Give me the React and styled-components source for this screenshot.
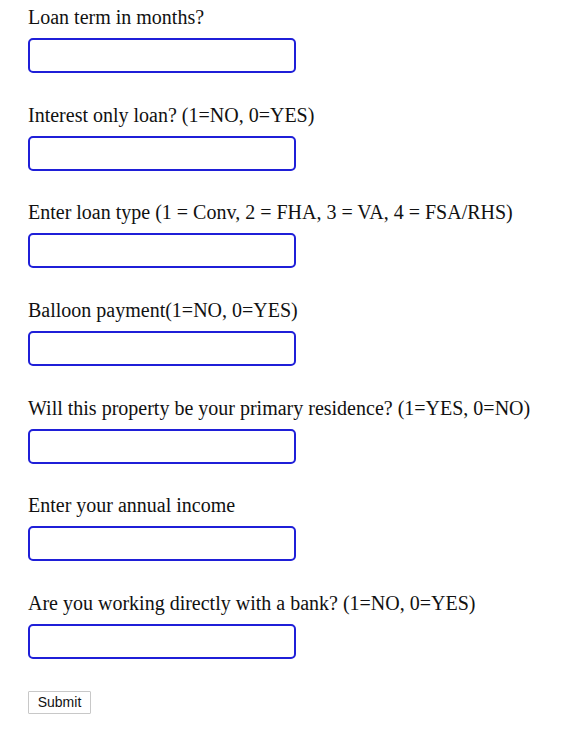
import React from 'react';
import styled, { createGlobalStyle } from 'styled-components';

const GlobalStyle = createGlobalStyle`
    body {
        margin: 0;
        background: #ffffff;
    }
`;

const Form = styled.form`
    display: flex;
    flex-direction: column;
    padding: 6px 0 0 28px;
`;

const Field = styled.div`
    display: flex;
    flex-direction: column;
    align-items: flex-start;
    height: 97.7px;
`;

const Label = styled.label`
    font-family: "Liberation Serif", "Times New Roman", serif;
    font-size: 20px;
    line-height: 22px;
    color: #111;
    margin-bottom: 10px;
    white-space: nowrap;
`;

const Input = styled.input`
    box-sizing: border-box;
    width: 268px;
    height: 35px;
    border: 2px solid #1f1fd8;
    border-radius: 5px;
    background: #fff;
    outline: none;
    padding: 0 6px;
    font-size: 16px;
`;

const SubmitButton = styled.button`
    box-sizing: border-box;
    margin-top: 1px;
    width: 63px;
    height: 23px;
    font-family: "Liberation Sans", Arial, sans-serif;
    font-size: 14px;
    color: #111;
    background: #fff;
    border: 1px solid #c8c8c8;
    border-radius: 1px;
    padding: 0;
`;

const questions = [
    'Loan term in months?',
    'Interest only loan? (1=NO, 0=YES)',
    'Enter loan type (1 = Conv, 2 = FHA, 3 = VA, 4 = FSA/RHS)',
    'Balloon payment(1=NO, 0=YES)',
    'Will this property be your primary residence? (1=YES, 0=NO)',
    'Enter your annual income',
    'Are you working directly with a bank? (1=NO, 0=YES)',
];

const App = () => (
    <>
        <GlobalStyle />
        <Form onSubmit={e => e.preventDefault()}>
            {questions.map((q, i) => (
                <Field key={i}>
                    <Label htmlFor={`q${i}`}>{q}</Label>
                    <Input id={`q${i}`} type="text" />
                </Field>
            ))}
            <SubmitButton type="submit">Submit</SubmitButton>
        </Form>
    </>
);

export default App;
